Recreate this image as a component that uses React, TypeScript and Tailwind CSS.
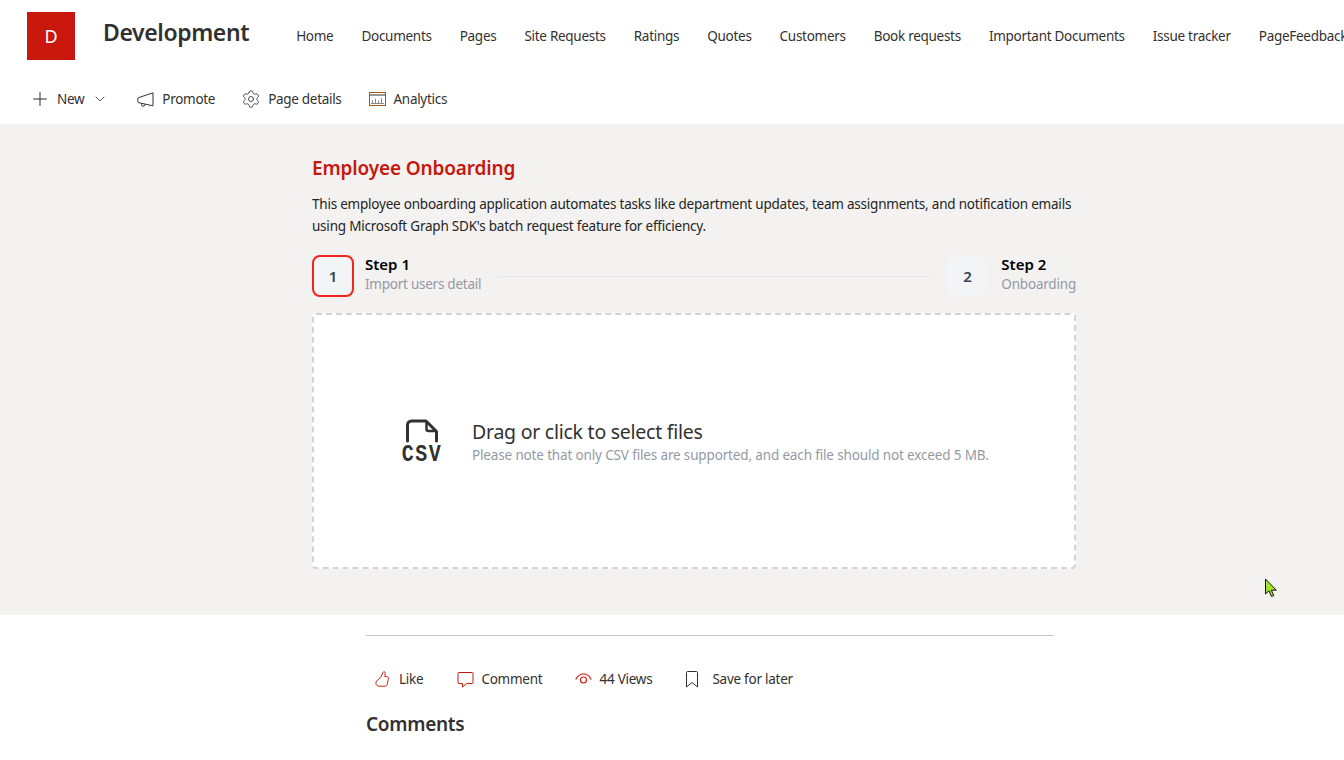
import React from 'react';
import { ChevronDown, Plus, Settings } from 'lucide-react';

const navItems = ['Home', 'Documents', 'Pages', 'Site Requests', 'Ratings', 'Quotes', 'Customers', 'Book requests', 'Important Documents', 'Issue tracker', 'PageFeedback'];

const Megaphone = () => (
  <svg width="17" height="15" viewBox="0 0 17 15" fill="none" stroke="#323130" strokeWidth="1">
    <path d="M16 .8v13L2 10.800a1.500 1.500 0 0 1-1.200-1.500V7a1.500 1.500 0 0 1 1.200-1.500z" />
    <path d="M4.500 11.500v.8a1.700 1.700 0 0 0 3.400.4l.1-.4" />
  </svg>
);

const AnalyticsIcon = () => (
  <svg width="17" height="14" viewBox="0 0 17 14" fill="none">
    <rect x="0.5" y="0.5" width="16" height="13" stroke="#a5540f" />
    <path d="M1 3h15" stroke="#323130" />
    <path d="M3.500 11V8M6.500 11V6.500M9.500 11V8.500M12.500 11V6M2 11.500h13" stroke="#8a8886" />
  </svg>
);

const ThumbIcon = () => (
  <svg width="15" height="18" viewBox="0 0 16 18" fill="none" stroke="#c8170d" strokeWidth="1">
    <path d="M6 7.500 8.500 2c.5-1.300 2.400-.9 2.300.6L10.500 6.500h2.300c1.100 0 1.900 1 1.600 2l-1.500 6.500c-.3 1.100-1.100 1.700-2.200 1.700H4.500C2.500 16.700 1 15.300 1 13.500c0-1.800 1-3 2.500-4z" />
  </svg>
);

const CommentIcon = () => (
  <svg width="17" height="17" viewBox="0 0 17 17" fill="none" stroke="#c8170d" strokeWidth="1">
    <path d="M2 1.500h13a1 1 0 0 1 1 1v9a1 1 0 0 1-1 1H9.500L5.500 16v-3.500H2a1 1 0 0 1-1-1v-9a1 1 0 0 1 1-1z" />
  </svg>
);

const EyeIcon = () => (
  <svg width="17" height="12" viewBox="0 0 17 12" fill="none" stroke="#c8170d" strokeWidth="1.100">
    <path d="M.7 6.500C2.500 2.800 5.300 1 8.500 1s6 1.800 7.800 5.500" />
    <circle cx="8.500" cy="7" r="3" />
  </svg>
);

const BookmarkIcon = () => (
  <svg width="14" height="17" viewBox="0 0 14 17" fill="none" stroke="#323130" strokeWidth="1">
    <path d="M1.500 16V1.500a1 1 0 0 1 1-1h9a1 1 0 0 1 1 1V16L7 11.500z" />
  </svg>
);

// file outline with the CSV letters kept as real text underneath
const CsvIcon = () => (
  <div className="flex w-[40px] shrink-0 flex-col items-center">
    <svg width="34" height="24" viewBox="0 0 34 24" fill="none" stroke="#323130" strokeWidth="3" strokeLinejoin="round" strokeLinecap="round">
      <path d="M2.500 22V6a4 4 0 0 1 4-4h14.500l10.500 10.500V22" />
      <path d="M21.500 3v7a2 2 0 0 0 2 2h7" strokeWidth="2.500" />
    </svg>
    <span className="mt-[4px] scale-y-[1.15] text-[20px] leading-[16px] font-bold tracking-[1.5px] text-[#323130] font-['Liberation_Mono',monospace]">CSV</span>
  </div>
);

const Cursor = () => (
  <svg className="absolute left-[1264px] top-[578px]" width="15" height="20" viewBox="0 0 15 20">
    <path d="M1.500 1v15l3.500-3.200L7.500 18.500l2.300-1-2.500-5.300h5z" fill="#a6e22a" stroke="#111" strokeWidth="1" />
  </svg>
);

function StepBadge({ n, active }: { n: number; active?: boolean }) {
  return (
    <div className={active
      ? 'flex h-[42px] w-[42px] shrink-0 items-center justify-center rounded-lg border-2 border-[#f0251c] bg-[#f3f4f6] text-[15px] font-semibold text-[#374151]'
      : 'flex h-[42px] w-[42px] shrink-0 items-center justify-center rounded-lg bg-[#f3f4f6] text-[15px] font-semibold text-[#374151]'}>
      {n}
    </div>
  );
}

export default function App() {
  return (
    <div className="relative h-[760px] w-[1344px] overflow-hidden bg-white text-[13.5px] tracking-[-0.25px] text-[#323130] font-['Noto_Sans',sans-serif]">
      {/* site header */}
      <header className="flex h-[72px] pl-[27px] pt-3">
        <div className="flex h-12 w-12 shrink-0 items-center justify-center bg-[#c8170d] text-lg tracking-normal text-white">D</div>
        <div className="ml-7 mt-[3px] text-[23px] leading-[34px] font-semibold tracking-[-0.4px] whitespace-nowrap">Development</div>
        <nav className="ml-[47px] mt-[14px] flex gap-7 leading-5 tracking-[-0.28px] whitespace-nowrap">
          {navItems.map((item) => <span key={item}>{item}</span>)}
        </nav>
      </header>

      {/* command bar */}
      <div className="flex h-[52px] items-center pl-[29px] pt-[2px] tracking-[-0.3px]">
        <Plus size={22} strokeWidth={1.1} />
        <span className="ml-[6px]">New</span>
        <ChevronDown size={16} strokeWidth={1.2} className="ml-2" />
        <div className="ml-[29px] flex items-center gap-2"><Megaphone /><span>Promote</span></div>
        <div className="ml-[26px] flex items-center gap-[7px]"><Settings size={20} strokeWidth={1} /><span>Page details</span></div>
        <div className="ml-[27px] flex items-center gap-2"><AnalyticsIcon /><span>Analytics</span></div>
      </div>

      {/* onboarding web part */}
      <section className="h-[491px] bg-[#f3f2f1] pl-[312px] pt-[30px]">
        <div className="w-[764px]">
          <h1 className="text-[19px] leading-7 font-semibold tracking-[-0.15px] text-[#c8170d]">Employee Onboarding</h1>
          <p className="mt-[11px] w-[764px] leading-[22px] tracking-[-0.22px] text-[#242424]">
            This employee onboarding application automates tasks like department updates, team assignments, and notification emails using Microsoft Graph SDK's batch request feature for efficiency.
          </p>

          <div className="mt-[18px] flex items-center">
            <StepBadge n={1} active />
            <div className="ml-[11px] -mt-[5px] leading-5">
              <div className="text-[15px] font-semibold tracking-normal text-black">Step 1</div>
              <div className="tracking-[-0.25px] text-[#949aa5]">Import users detail</div>
            </div>
            <div className="mx-4 h-px flex-1 bg-[#e5e7eb]" />
            <StepBadge n={2} />
            <div className="ml-[13px] -mt-[5px] leading-5">
              <div className="text-[15px] font-semibold tracking-normal text-black">Step 2</div>
              <div className="tracking-[-0.2px] text-[#949aa5]">Onboarding</div>
            </div>
          </div>

          <div className="mt-4 flex h-[256px] items-center rounded border-2 border-dashed border-[#d1d5db] bg-white pl-[88px]">
            <CsvIcon />
            <div className="ml-[30px] mb-[-3px]">
              <div className="text-[19.5px] leading-6 tracking-[-0.25px]">Drag or click to select files</div>
              <div className="mt-[1px] leading-5 tracking-[-0.15px] text-[#949aa5]">Please note that only CSV files are supported, and each file should not exceed 5 MB.</div>
            </div>
          </div>
        </div>
      </section>

      {/* page footer actions */}
      <div className="ml-[366px] w-[688px] pt-5">
        <div className="h-px bg-[#c8c6c4]" />
        <div className="mt-[33px] flex h-5 items-center pl-[9px]">
          <ThumbIcon /><span className="ml-[9px]">Like</span>
          <span className="ml-[34px]"><CommentIcon /></span><span className="ml-[7px]">Comment</span>
          <span className="ml-[33px]"><EyeIcon /></span><span className="ml-[7px]">44 Views</span>
          <span className="ml-[33px]"><BookmarkIcon /></span><span className="ml-[13px]">Save for later</span>
        </div>
        <h2 className="mt-[21px] text-[19px] leading-7 font-semibold tracking-[-0.3px]">Comments</h2>
      </div>

      <Cursor />
    </div>
  );
}
